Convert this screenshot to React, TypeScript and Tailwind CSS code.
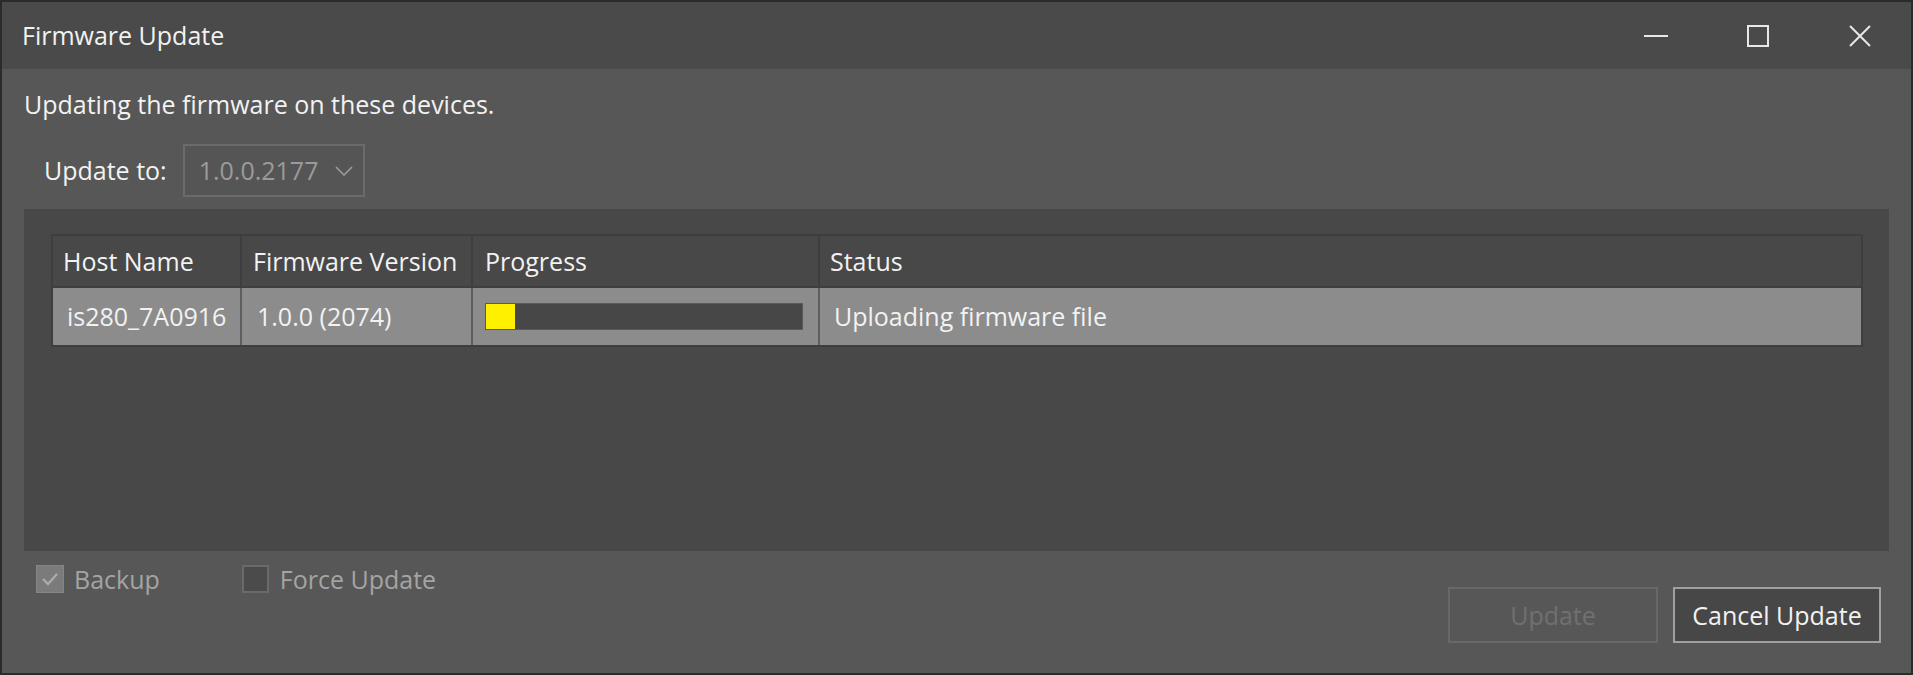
import React from "react";

const font = { fontFamily: '"Open Sans", "Noto Sans", sans-serif' };

function Minimize() {
  return (
    <svg width="24" height="4" viewBox="0 0 24 4">
      <line x1="0" y1="2" x2="24" y2="2" stroke="#e8e8e8" strokeWidth="2" />
    </svg>
  );
}
function Maximize() {
  return (
    <svg width="22" height="22" viewBox="0 0 22 22">
      <rect x="1" y="1" width="20" height="20" fill="none" stroke="#e8e8e8" strokeWidth="2" />
    </svg>
  );
}
function CloseIcon() {
  return (
    <svg width="22" height="22" viewBox="0 0 22 22">
      <path d="M1 1 L21 21 M21 1 L1 21" stroke="#e8e8e8" strokeWidth="2" />
    </svg>
  );
}

export default function App() {
  return (
    <div
      className="w-[1913px] h-[675px] border-2 border-[#2b2b2b] bg-[#575757] flex flex-col text-[25px] text-[#f2f2f2] overflow-hidden"
      style={font}
    >
      {/* Title bar */}
      <div className="h-[67px] bg-[#4a4a4a] flex items-center shrink-0">
        <div className="pl-[20px] flex-1 leading-none">Firmware Update</div>
        <div className="flex h-full">
          <div className="w-[102px] h-full flex items-center justify-center">
            <Minimize />
          </div>
          <div className="w-[102px] h-full flex items-center justify-center">
            <Maximize />
          </div>
          <div className="w-[102px] h-full flex items-center justify-center">
            <CloseIcon />
          </div>
        </div>
      </div>

      {/* Body */}
      <div className="flex flex-col px-[22px] pt-[19px]">
        <div className="h-[32px] flex items-center leading-none">Updating the firmware on these devices.</div>

        <div className="mt-[24px] ml-[20px] flex items-center gap-[16px]">
          <span className="leading-none">Update to:</span>
          <div className="w-[182px] h-[53px] border-2 border-[#6b6b6b] bg-[#555555] flex items-center pl-[14px] pr-[10px] text-[#9b9b9b]">
            <span className="flex-1 leading-none">1.0.0.2177</span>
            <svg width="18" height="10" viewBox="0 0 18 10">
              <path d="M1 1 L9 9 L17 1" fill="none" stroke="#9b9b9b" strokeWidth="1.6" />
            </svg>
          </div>
        </div>

        {/* Panel */}
        <div className="mt-[12px] h-[342px] bg-[#484848] pl-[27px] pr-[26px] pt-[25px]">
          <div className="border-2 border-[#3e3e3e]">
            <div className="flex h-[50px] bg-[#484848]">
              <div className="w-[189px] border-r-2 border-[#3e3e3e] flex items-center pl-[10px] leading-none">Host Name</div>
              <div className="w-[231px] border-r-2 border-[#3e3e3e] flex items-center pl-[11px] leading-none">Firmware Version</div>
              <div className="w-[347px] border-r-2 border-[#3e3e3e] flex items-center pl-[12px] leading-none">Progress</div>
              <div className="flex-1 flex items-center pl-[10px] leading-none">Status</div>
            </div>
            <div className="flex h-[59px] bg-[#8c8c8c] border-t-2 border-[#3e3e3e]">
              <div className="w-[189px] border-r-2 border-[#5e5e5e] flex items-center pl-[14px] leading-none">is280_7A0916</div>
              <div className="w-[231px] border-r-2 border-[#5e5e5e] flex items-center pl-[15px] leading-none">1.0.0 (2074)</div>
              <div className="w-[347px] border-r-2 border-[#5e5e5e] flex items-center pl-[12px]">
                <div className="w-[318px] h-[27px] bg-[#474747] border border-[#5a5a5a] flex">
                  <div className="w-[29px] h-full bg-[#fff000]" />
                </div>
              </div>
              <div className="flex-1 flex items-center pl-[14px] leading-none">Uploading firmware file</div>
            </div>
          </div>
        </div>

        {/* Bottom */}
        <div className="flex justify-between mt-[14px] pr-[8px]">
          <div className="flex items-start h-[28px] pl-[12px]">
            <div className="flex items-center text-[#a4a4a4]">
              <div className="w-[28px] h-[28px] bg-[#7b7b7b] border border-[#858585] flex items-center justify-center">
                <svg width="18" height="14" viewBox="0 0 18 14">
                  <path d="M2 7 L7 12 L16 2" fill="none" stroke="#ababab" strokeWidth="2.4" />
                </svg>
              </div>
              <span className="ml-[10px] leading-none">Backup</span>
            </div>
            <div className="flex items-center text-[#a4a4a4] ml-[82px]">
              <div className="w-[27px] h-[28px] bg-[#4b4b4b] border-2 border-[#6a6a6a]" />
              <span className="ml-[11px] leading-none">Force Update</span>
            </div>
          </div>
          <div className="flex gap-[15px] mt-[22px]">
            <div className="w-[210px] h-[56px] border-2 border-[#686868] flex items-center justify-center text-[#707070] leading-none">
              Update
            </div>
            <div className="w-[208px] h-[56px] border-2 border-[#a0a0a0] bg-[#474747] flex items-center justify-center leading-none">
              Cancel Update
            </div>
          </div>
        </div>
      </div>
    </div>
  );
}
